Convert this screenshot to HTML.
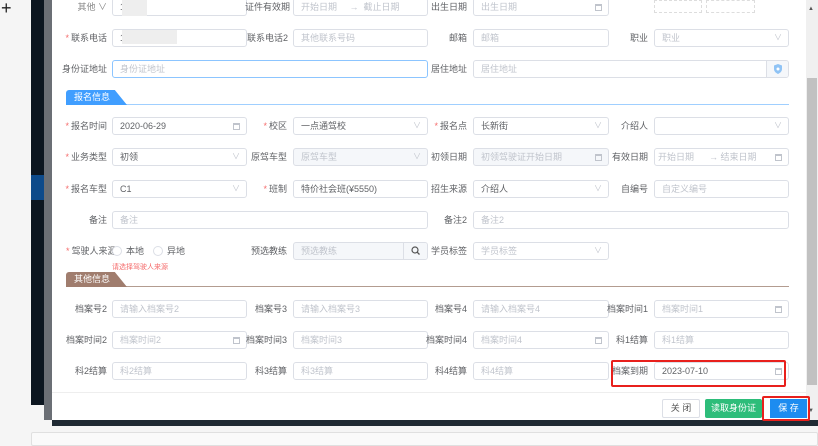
<!DOCTYPE html>
<html><head><meta charset="utf-8"><style>
*{margin:0;padding:0;box-sizing:border-box}
body{width:818px;height:444px;overflow:hidden;background:#f5f5f5;position:relative;font-family:"Liberation Sans","Noto Sans CJK SC",sans-serif;font-size:9px;color:#606266}
.a{position:absolute}
.lb{position:absolute;text-align:right;white-space:nowrap;line-height:18px;height:18px}
.lb i{color:#f56c6c;font-style:normal;margin-right:2px}
.in{position:absolute;height:18px;border:1px solid #dcdfe6;border-radius:3px;background:#fff;line-height:16px;padding-left:7px;color:#c0c4cc;white-space:nowrap;overflow:hidden}
.in.v{color:#606266}
.in.d{background:#f5f7fa;color:#c0c4cc}
.ar{position:absolute;right:6px;top:0;color:#c0c4cc;font-size:8px}
.cal{position:absolute;right:6px;top:5px;width:7px;height:7px;border:1px solid #c0c4cc;border-top-width:2px}
</style></head><body>
<div class="a" style="left:1px;top:0;font-size:18px;color:#222;line-height:16px">+</div>
<div class="a" style="left:31px;top:0;width:13px;height:405px;background:#0c1620"></div>
<div class="a" style="left:31px;top:175px;width:13px;height:25px;background:#0d4a8a"></div>
<div class="a" style="left:44px;top:0;width:8px;height:420px;background:#6b6f75"></div>
<div class="a" style="left:52px;top:0;width:754px;height:420px;background:#fff"></div>
<div class="a" style="left:52px;top:420px;width:766px;height:6px;background:#1f2a33"></div>
<div class="a" style="left:31px;top:432px;width:787px;height:14px;border:1px solid #e0e0e0;background:#fafafa;border-radius:2px"></div>
<div class="a" style="left:806px;top:0;width:12px;height:420px;background:#f0f0f0"></div>
<div class="a" style="left:807px;top:78px;width:10px;height:307px;background:#c1c1c1"></div>
<div class="a" style="left:808px;top:6px;font-size:6px;color:#555">▲</div>
<div class="a" style="left:808px;top:408px;font-size:6px;color:#555">▼</div>

<div class="lb" style="left:60px;width:47px;top:-2px;color:#888">其他 ∨</div>
<div class="in v" style="left:112px;top:-2px;width:135px">1</div>
<div class="a" style="left:122px;top:0;width:25px;height:16px;background:#eee"></div>
<div class="lb" style="left:240px;width:50px;top:-2px">证件有效期</div>
<div class="in" style="left:293px;top:-2px;width:135px">开始日期 &nbsp;&nbsp;&nbsp;&nbsp;→ &nbsp;截止日期</div>
<div class="lb" style="left:420px;width:47px;top:-2px">出生日期</div>
<div class="in" style="left:473px;top:-2px;width:136px">出生日期<span class="cal"></span></div>
<div class="a" style="left:654px;top:0;width:48px;height:13px;border:1px dashed #ddd"></div>
<div class="a" style="left:706px;top:0;width:49px;height:13px;border:1px dashed #ddd"></div>

<div class="lb" style="left:55px;width:52px;top:29px"><i>*</i>联系电话</div>
<div class="in v" style="left:112px;top:29px;width:135px">1</div>
<div class="a" style="left:122px;top:30px;width:55px;height:14px;background:#eee"></div>
<div class="lb" style="left:240px;width:48px;top:29px">联系电话2</div>
<div class="in" style="left:293px;top:29px;width:135px">其他联系号码</div>
<div class="lb" style="left:420px;width:47px;top:29px">邮箱</div>
<div class="in" style="left:473px;top:29px;width:136px">邮箱</div>
<div class="lb" style="left:600px;width:48px;top:29px">职业</div>
<div class="in" style="left:654px;top:29px;width:135px">职业<span class="ar">∨</span></div>

<div class="lb" style="left:55px;width:52px;top:60px">身份证地址</div>
<div class="in" style="left:112px;top:60px;width:316px;border-color:#8cc5ff">身份证地址</div>
<div class="lb" style="left:420px;width:47px;top:60px">居住地址</div>
<div class="in" style="left:473px;top:60px;width:316px">居住地址<span class="a" style="right:0;top:0;width:22px;height:16px;background:#f5f7fa;border-left:1px solid #dcdfe6"><svg width="22" height="16" viewBox="0 0 22 16"><path d="M11 3 L15 4.5 V8 C15 10.5 13 12 11 13 C9 12 7 10.5 7 8 V4.5 Z" fill="#8fc3f5"/><circle cx="11" cy="8" r="1.5" fill="#fff"/></svg></span></div>

<div class="a" style="left:66px;top:104px;width:723px;height:1px;background:#a0cfff"></div>
<div class="a" style="left:66px;top:90px;width:61px;height:15px;background:#409eff;color:#fff;line-height:15px;padding-left:8px;clip-path:polygon(0 0,80% 0,100% 100%,0 100%);border-radius:3px 0 0 0">报名信息</div>

<div class="lb" style="left:55px;width:52px;top:117px"><i>*</i>报名时间</div>
<div class="in v" style="left:112px;top:117px;width:135px">2020-06-29<span class="cal"></span></div>
<div class="lb" style="left:240px;width:47px;top:117px"><i>*</i>校区</div>
<div class="in v" style="left:293px;top:117px;width:135px">一点通驾校<span class="ar">∨</span></div>
<div class="lb" style="left:420px;width:47px;top:117px"><i>*</i>报名点</div>
<div class="in v" style="left:473px;top:117px;width:136px">长新街<span class="ar">∨</span></div>
<div class="lb" style="left:600px;width:48px;top:117px">介绍人</div>
<div class="in" style="left:654px;top:117px;width:135px"><span class="ar">∨</span></div>

<div class="lb" style="left:55px;width:52px;top:148px"><i>*</i>业务类型</div>
<div class="in v" style="left:112px;top:148px;width:135px">初领<span class="ar">∨</span></div>
<div class="lb" style="left:240px;width:47px;top:148px">原驾车型</div>
<div class="in d" style="left:293px;top:148px;width:135px">原驾车型<span class="ar">∨</span></div>
<div class="lb" style="left:420px;width:47px;top:148px">初领日期</div>
<div class="in d" style="left:473px;top:148px;width:136px">初领驾驶证开始日期<span class="cal"></span></div>
<div class="lb" style="left:600px;width:48px;top:148px">有效日期</div>
<div class="in" style="left:654px;top:148px;width:135px;padding-left:3px">开始日期 &nbsp;&nbsp;&nbsp;&nbsp;&nbsp;→ 结束日期<span class="cal"></span></div>

<div class="lb" style="left:55px;width:52px;top:180px"><i>*</i>报名车型</div>
<div class="in v" style="left:112px;top:180px;width:135px">C1<span class="ar">∨</span></div>
<div class="lb" style="left:240px;width:47px;top:180px"><i>*</i>班制</div>
<div class="in v" style="left:293px;top:180px;width:135px">特价社会班(¥5550)</div>
<div class="lb" style="left:420px;width:47px;top:180px">招生来源</div>
<div class="in v" style="left:473px;top:180px;width:136px">介绍人<span class="ar">∨</span></div>
<div class="lb" style="left:600px;width:48px;top:180px">自编号</div>
<div class="in" style="left:654px;top:180px;width:135px">自定义编号</div>

<div class="lb" style="left:55px;width:52px;top:211px">备注</div>
<div class="in" style="left:112px;top:211px;width:316px">备注</div>
<div class="lb" style="left:420px;width:47px;top:211px">备注2</div>
<div class="in" style="left:473px;top:211px;width:316px">备注2</div>

<div class="lb" style="left:66px;top:242px;text-align:left"><i>*</i>驾驶人来源</div>
<div class="a" style="left:112px;top:246px;width:10px;height:10px;border:1px solid #dcdfe6;border-radius:50%;background:#fff"></div>
<div class="lb" style="left:126px;top:242px;text-align:left">本地</div>
<div class="a" style="left:153px;top:246px;width:10px;height:10px;border:1px solid #dcdfe6;border-radius:50%"></div>
<div class="lb" style="left:167px;top:242px;text-align:left">异地</div>
<div class="a" style="left:112px;top:262px;color:#f56c6c;font-size:7px">请选择驾驶人来源</div>
<div class="lb" style="left:240px;width:47px;top:242px">预选教练</div>
<div class="in d" style="left:293px;top:242px;width:135px">预选教练<span class="a" style="right:0;top:0;width:24px;height:16px;border-left:1px solid #dcdfe6;background:#f5f7fa"><svg width="24" height="16" viewBox="0 0 24 16"><circle cx="11" cy="7" r="3" fill="none" stroke="#555" stroke-width="1.2"/><path d="M13.2 9.2 L15.5 11.5" stroke="#555" stroke-width="1.3"/></svg></span></div>
<div class="lb" style="left:420px;width:47px;top:242px">学员标签</div>
<div class="in" style="left:473px;top:242px;width:136px">学员标签<span class="ar">∨</span></div>

<div class="a" style="left:66px;top:286px;width:723px;height:1px;background:#b39c90"></div>
<div class="a" style="left:66px;top:272px;width:61px;height:15px;background:#a07d6e;color:#fff;line-height:15px;padding-left:8px;clip-path:polygon(0 0,80% 0,100% 100%,0 100%);border-radius:3px 0 0 0">其他信息</div>

<div class="lb" style="left:55px;width:52px;top:300px">档案号2</div>
<div class="in" style="left:112px;top:300px;width:135px">请输入档案号2</div>
<div class="lb" style="left:240px;width:47px;top:300px">档案号3</div>
<div class="in" style="left:293px;top:300px;width:135px">请输入档案号3</div>
<div class="lb" style="left:420px;width:47px;top:300px">档案号4</div>
<div class="in" style="left:473px;top:300px;width:136px">请输入档案号4</div>
<div class="lb" style="left:600px;width:48px;top:300px">档案时间1</div>
<div class="in" style="left:654px;top:300px;width:135px">档案时间1<span class="cal"></span></div>

<div class="lb" style="left:55px;width:52px;top:331px">档案时间2</div>
<div class="in" style="left:112px;top:331px;width:135px">档案时间2<span class="cal"></span></div>
<div class="lb" style="left:240px;width:47px;top:331px">档案时间3</div>
<div class="in" style="left:293px;top:331px;width:135px">档案时间3</div>
<div class="lb" style="left:420px;width:47px;top:331px">档案时间4</div>
<div class="in" style="left:473px;top:331px;width:136px">档案时间4<span class="cal"></span></div>
<div class="lb" style="left:600px;width:48px;top:331px">科1结算</div>
<div class="in" style="left:654px;top:331px;width:135px">科1结算</div>

<div class="lb" style="left:55px;width:52px;top:362px">科2结算</div>
<div class="in" style="left:112px;top:362px;width:135px">科2结算</div>
<div class="lb" style="left:240px;width:47px;top:362px">科3结算</div>
<div class="in" style="left:293px;top:362px;width:135px">科3结算</div>
<div class="lb" style="left:420px;width:47px;top:362px">科4结算</div>
<div class="in" style="left:473px;top:362px;width:136px">科4结算</div>
<div class="lb" style="left:600px;width:48px;top:362px">档案到期</div>
<div class="in v" style="left:654px;top:362px;width:135px">2023-07-10<span class="cal"></span></div>
<div class="a" style="left:611px;top:360px;width:175px;height:27px;border:2px solid #e8201c;border-radius:2px"></div>

<div class="a" style="left:52px;top:392px;width:754px;height:1px;background:#eee"></div>
<div class="a" style="left:662px;top:399px;width:38px;height:19px;border:1px solid #dcdfe6;border-radius:2px;text-align:center;line-height:17px;color:#555">关 闭</div>
<div class="a" style="left:705px;top:399px;width:57px;height:19px;background:#2ebd7a;border-radius:2px;text-align:center;line-height:19px;color:#fff">读取身份证</div>
<div class="a" style="left:770px;top:399px;width:37px;height:19px;background:#1d8cf0;text-align:center;line-height:19px;color:#fff">保 存</div>
<div class="a" style="left:762px;top:396px;width:48px;height:25px;border:2px solid #e8201c;border-radius:2px"></div>
</body></html>
